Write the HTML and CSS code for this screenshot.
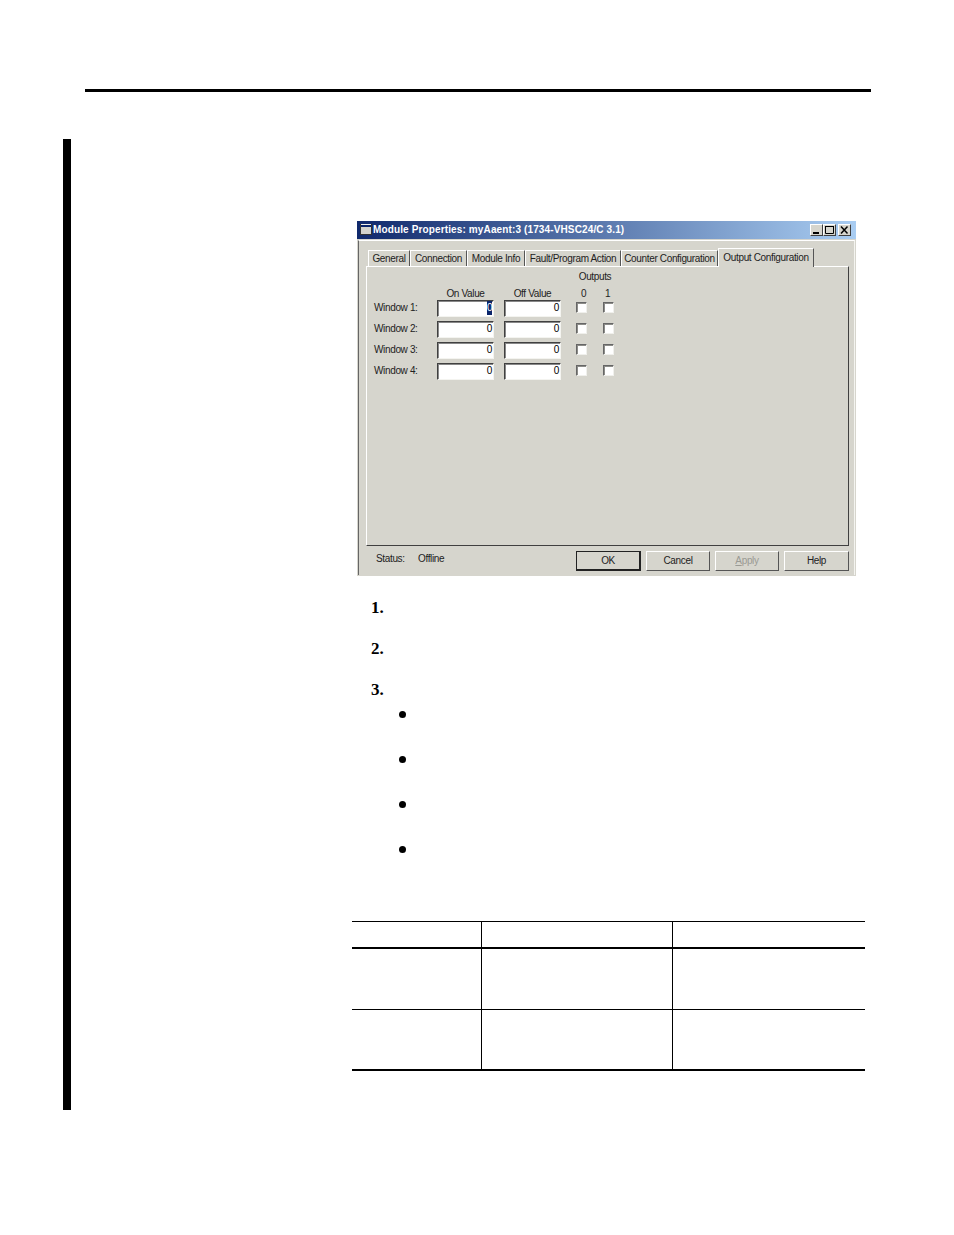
FILE: index.html
```html
<!doctype html>
<html>
	<head>
		<meta charset="utf-8"/>
		<title>Module Properties</title>
		<link rel="stylesheet" href="styles.css">
	</head>
	<body>
		<div class="top-rule"></div>
		<div class="page">
			<div class="change-bar"></div>
			<div class="content">
				<div class="dialog">
					<div class="titlebar">
						<svg class="title-icon" width="12" height="11" viewBox="0 0 12 11">
							<rect x="0" y="0" width="12" height="11" fill="#333"/>
							<rect x="1" y="0" width="10" height="1" fill="#f0f0ec"/>
							<rect x="1" y="1" width="10" height="2" fill="#0a246a"/>
							<rect x="1" y="3" width="10" height="7" fill="#d4d3cd"/>
						</svg>
						<span class="title-text">Module Properties: myAaent:3 (1734-VHSC24/C 3.1)</span>
						<div class="win-buttons">
							<span class="win-btn"><svg width="11" height="10" viewBox="0 0 11 10"><rect x="2" y="7" width="6" height="2" fill="#000"/></svg></span>
							<span class="win-btn"><svg width="11" height="10" viewBox="0 0 11 10"><path d="M1.5 1.5h8v7h-8z M1 1.5h9" fill="none" stroke="#000"/></svg></span>
							<span class="win-btn win-close"><svg width="11" height="10" viewBox="0 0 11 10"><path d="M2 1.5l6.5 7M8.500 1.500l-6.500 7" fill="none" stroke="#000" stroke-width="1.500"/></svg></span>
						</div>
					</div>
					<div class="dialog-body">
						<div class="tabs">
							<div class="tab tab-general">General</div>
							<div class="tab tab-connection">Connection</div>
							<div class="tab tab-info">Module Info</div>
							<div class="tab tab-fault">Fault/Program Action</div>
							<div class="tab tab-counter">Counter Configuration</div>
							<div class="tab tab-output active">Output Configuration</div>
						</div>
						<div class="panel">
							<div class="form">
								<div class="outputs-head">Outputs</div>
								<div></div>
								<div class="col-head">On Value</div>
								<div class="col-head">Off Value</div>
								<div class="bit-head">0</div>
								<div class="bit-head">1</div>

								<div class="row-label">Window 1:</div>
								<div class="field"><span class="selected">0</span></div>
								<div class="field">0</div>
								<div class="check"></div>
								<div class="check"></div>

								<div class="row-label">Window 2:</div>
								<div class="field">0</div>
								<div class="field">0</div>
								<div class="check"></div>
								<div class="check"></div>

								<div class="row-label">Window 3:</div>
								<div class="field">0</div>
								<div class="field">0</div>
								<div class="check"></div>
								<div class="check"></div>

								<div class="row-label">Window 4:</div>
								<div class="field">0</div>
								<div class="field">0</div>
								<div class="check"></div>
								<div class="check"></div>
							</div>
						</div>
						<div class="footer">
							<span class="status">Status:</span>
							<span class="status-value">Offline</span>
							<div class="buttons">
								<button class="btn btn-default">OK</button>
								<button class="btn">Cancel</button>
								<button class="btn btn-off"><u>A</u>pply</button>
								<button class="btn">Help</button>
							</div>
						</div>
					</div>
				</div>

				<div class="steps">
					<div class="step">1.</div>
					<div class="step">2.</div>
					<div class="step">3.</div>
				</div>
				<ul class="bullets">
					<li></li>
					<li></li>
					<li></li>
					<li></li>
				</ul>

				<table class="data-table">
					<thead>
						<tr><th></th><th></th><th></th></tr>
					</thead>
					<tbody>
						<tr><td></td><td></td><td></td></tr>
						<tr><td></td><td></td><td></td></tr>
					</tbody>
				</table>
			</div>
		</div>
	</body>
</html>
```

FILE: styles.css
```css
body {
	margin: 0;
	background: #fff;
	color: #000;
	font-family: "Liberation Serif", serif;
}

.top-rule {
	width: 786px;
	height: 3px;
	margin: 89px 0 0 85px;
	background: #000;
}

.page {
	display: flex;
	margin: 47px 0 0 63px;
}

.change-bar {
	width: 8px;
	height: 971px;
	background: #000;
}

.content {
	flex: 1;
	padding-top: 82px;
}

/* dialog */
.dialog {
	box-sizing: border-box;
	width: 499px;
	height: 355px;
	margin-left: 286px;
	padding: 0 1px 1px;
	display: flex;
	flex-direction: column;
	background: #d6d5cd;
	font-family: "Liberation Sans", sans-serif;
	font-size: 10px;
	letter-spacing: -0.35px;
	color: #222;
}

.titlebar {
	height: 18px;
	margin: 0 -1px;
	padding: 0 5px 0 3px;
	display: flex;
	align-items: center;
	background: linear-gradient(to right, #10296c, #a9cdf2);
	flex: none;
}

.title-icon {
	flex: none;
	margin-bottom: 1px;
}

.title-text {
	margin: 0 0 1px 1px;
	color: #fff;
	font-size: 10px;
	font-weight: bold;
	letter-spacing: 0.13px;
	white-space: nowrap;
}

.win-buttons {
	margin-left: auto;
	display: flex;
}

.win-btn {
	box-sizing: border-box;
	width: 13px;
	height: 12px;
	display: flex;
	background: #d6d5cd;
	border: 1px solid;
	border-color: #fff #404040 #404040 #fff;
}

.win-close {
	margin-left: 2px;
}

.dialog-body {
	flex: 1;
	padding: 8px 5px 0 7px;
	display: flex;
	flex-direction: column;
	border-top: 1px solid #fff;
	border-left: 1px solid #666;
	border-right: 1px solid #f4f4f0;
	margin-top: 1px;
}

/* tabs */
.tabs {
	height: 17px;
	padding-left: 2px;
	display: flex;
	align-items: flex-end;
	flex: none;
}

.tab {
	box-sizing: border-box;
	height: 16px;
	line-height: 15px;
	text-align: center;
	white-space: nowrap;
	border-top: 1px solid #fff;
	border-left: 1px solid #fff;
	border-right: 1px solid #555;
}

.tab-general { width: 42px; }
.tab-connection { width: 57px; }
.tab-info { width: 58px; }
.tab-fault { width: 96px; }
.tab-counter { width: 97px; }
.tab-output { width: 96px; }

.tab.active {
	height: 19px;
	line-height: 17px;
	margin-bottom: -1px;
	position: relative;
	background: #d6d5cd;
}

.panel {
	box-sizing: border-box;
	width: 483px;
	height: 280px;
	padding: 3px 0 0 7px;
	flex: none;
	border: 1px solid;
	border-color: #fff #404040 #404040 #fff;
}

.form {
	display: grid;
	grid-template-columns: 63px 67px 72px 27px 11px;
	grid-template-rows: 16px 14px repeat(4, 21px);
}

.outputs-head {
	grid-column: 4 / 6;
	text-align: center;
	line-height: 13px;
}

.col-head {
	width: 57px;
	text-align: center;
	line-height: 16px;
}

.bit-head {
	padding-left: 5px;
	line-height: 16px;
}

.bit-head + .bit-head {
	padding-left: 2px;
}

.row-label {
	line-height: 16px;
}

.field {
	box-sizing: border-box;
	width: 57px;
	height: 17px;
	padding-right: 1px;
	text-align: right;
	line-height: 14px;
	background: #fff;
	color: #000;
	border: 1px solid;
	border-color: #404040 #f4f4f0 #f4f4f0 #404040;
	box-shadow: inset 1px 1px 0 #888;
}

.selected {
	display: inline-block;
	width: 5px;
	background: #0a246a;
	color: #fff;
	text-align: center;
}

.check {
	box-sizing: border-box;
	width: 11px;
	height: 11px;
	margin-top: 2px;
	background: #fff;
	border: 1px solid;
	border-color: #666 #f0f0ec #f0f0ec #666;
	box-shadow: inset 1px 1px 0 #8c8c88;
}

/* footer */
.footer {
	flex: 1;
	padding-left: 10px;
	display: flex;
	align-items: flex-start;
}

.status {
	width: 42px;
	margin-top: 7px;
}

.status-value {
	margin-top: 7px;
}

.buttons {
	margin-left: auto;
	margin-top: 5px;
	display: flex;
	gap: 5px;
}

.btn {
	box-sizing: border-box;
	width: 64px;
	height: 20px;
	padding: 0 0 2px;
	font: inherit;
	letter-spacing: inherit;
	color: inherit;
	background: #d6d5cd;
	border: 1px solid;
	border-color: #fff #555 #555 #fff;
}

.btn:last-child {
	width: 65px;
}

.btn-default {
	width: 65px;
	padding-bottom: 1px;
	border: 2px solid #222;
	border-top-width: 1px;
	border-left-width: 1px;
}

.btn-off {
	color: #9a9a94;
}

/* numbered steps and bullets */
.steps {
	margin: 22px 0 0 300px;
}

.step {
	height: 20px;
	padding-bottom: 21px;
	line-height: 20px;
	font-size: 17px;
	font-weight: bold;
}

.steps .step:last-child {
	padding-bottom: 0;
}

.bullets {
	list-style: none;
	margin: 4px 0 0 328px;
	padding: 0;
}

.bullets li {
	height: 20px;
	padding-bottom: 25px;
	display: flex;
	align-items: center;
}

.bullets li::before {
	content: "";
	width: 7px;
	height: 7px;
	border-radius: 50%;
	background: #000;
}

.bullets li:last-child::before {
	margin-top: 1px;
}

/* table */
.data-table {
	width: 513px;
	margin: 37px 0 0 281px;
	table-layout: fixed;
	border-collapse: separate;
	border-spacing: 0;
	border-top: 1px solid #000;
	border-bottom: 2px solid #000;
}

.data-table th {
	height: 25px;
	padding: 0;
	border-bottom: 2px solid #000;
}

.data-table td {
	height: 59px;
	padding: 0;
}

.data-table tbody tr:first-child td {
	height: 60px;
	border-bottom: 1px solid #000;
}

.data-table th:first-child,
.data-table td:first-child {
	width: 129px;
}

.data-table th:nth-child(2),
.data-table td:nth-child(2) {
	width: 190px;
}

.data-table th + th,
.data-table td + td {
	border-left: 1px solid #000;
}
```
